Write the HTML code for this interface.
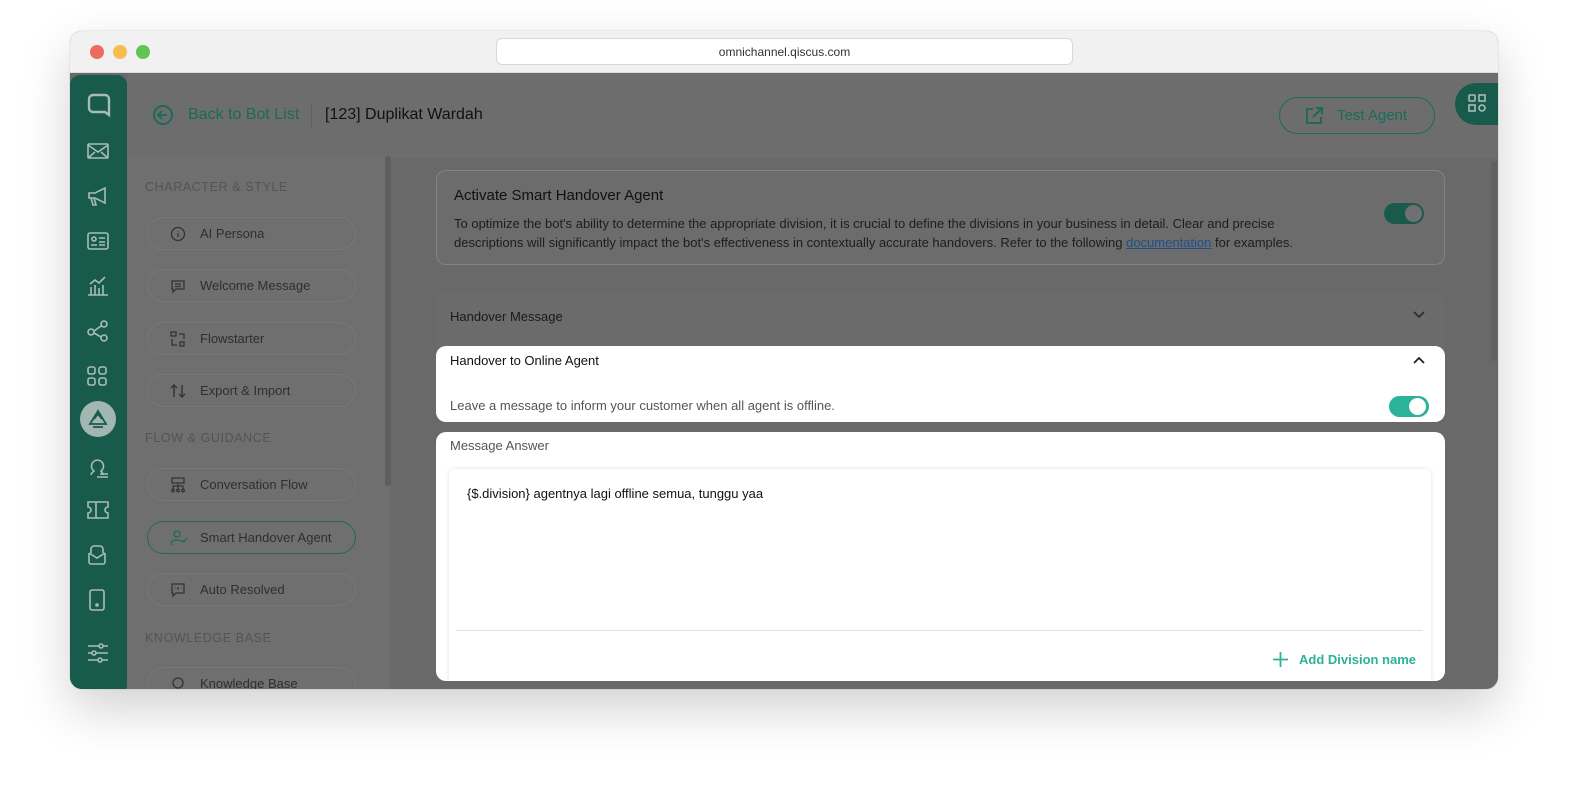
<!DOCTYPE html>
<html><head><meta charset="utf-8">
<style>
*{box-sizing:border-box;margin:0;padding:0}
body{width:1580px;height:804px;background:#fff;font-family:"Liberation Sans",sans-serif;position:relative;overflow:hidden}
.win{position:absolute;left:70px;top:31px;width:1428px;height:658px;border-radius:12px;overflow:hidden;background:#696969;box-shadow:0 20px 50px rgba(0,0,0,.18),0 0 0 1px rgba(0,0,0,.05)}
.tb{position:absolute;left:0;top:0;width:100%;height:42px;background:#f1f1f1;border-bottom:1px solid #dcdcdc}
.dot{position:absolute;top:14px;width:14px;height:14px;border-radius:50%}
.url{position:absolute;left:426px;top:7px;width:577px;height:27px;background:#fff;border:1px solid #d8d8d8;border-radius:6px;text-align:center;font-size:12px;line-height:26px;color:#333}
.a{position:absolute}
.rail{position:absolute;left:0;top:44px;width:57px;height:620px;background:#185b4c;border-radius:10px}
.rail svg{position:absolute;left:17px}
.hdr{position:absolute;left:57px;top:42px;width:1371px;height:85px;background:#6d6d6d}
.nav{position:absolute;left:57px;top:127px;width:263px;height:540px;background:#6f6f6f}
.sec{position:absolute;left:75px;font-size:12.5px;letter-spacing:.6px;color:#545454}
.pill{position:absolute;left:77px;width:209px;height:33px;border:1px solid #787878;border-radius:17px;font-size:13px;color:#2f2f2f;line-height:31px;padding-left:52px}
.pill svg{position:absolute;left:22px;top:8px}
.card{position:absolute;left:366px;width:1009px;border-radius:10px}
.w{background:#fff}
</style></head><body>
<div class="win">
 <div class="tb">
  <div class="dot" style="left:20px;background:#ee6a5f"></div>
  <div class="dot" style="left:43px;background:#f5be4f"></div>
  <div class="dot" style="left:66px;background:#61c554"></div>
  <div class="url">omnichannel.qiscus.com</div>
 </div>
 <div class="hdr"></div>
 <div class="nav"></div>
 <div class="a" style="left:315px;top:125px;width:6px;height:330px;background:#5e5e5e;border-radius:3px"></div>
 <div class="a" style="left:1421px;top:130px;width:6px;height:200px;background:#606060;border-radius:3px"></div>
 <div class="rail">
  <svg style="top:18px" width="24" height="26" viewBox="0 0 24 26" fill="none" stroke="#a8bcb6" stroke-width="2.4"><path d="M6 2h12a4 4 0 0 1 4 4v16l-4-3H6a4 4 0 0 1-4-4V6a4 4 0 0 1 4-4z"/></svg>
  <svg style="top:67px" width="22" height="18" viewBox="0 0 22 18" fill="none" stroke="#a8bcb6" stroke-width="1.6"><rect x="1" y="2" width="20" height="14" rx="1"/><path d="M1 3l10 7 10-7M1 16l7-6M21 16l-7-6"/></svg>
  <svg style="top:111px" width="22" height="20" viewBox="0 0 22 20" fill="none" stroke="#a8bcb6" stroke-width="1.6"><path d="M2 7h6l10-5v15L8 12H2zM4 12l2 7h3l-2-7"/></svg>
  <svg style="top:157px" width="22" height="18" viewBox="0 0 22 18" fill="none" stroke="#a8bcb6" stroke-width="1.6"><rect x="1" y="1" width="20" height="16" rx="2"/><circle cx="7" cy="7" r="2"/><path d="M4 13h6M12 6h6M12 10h6M12 13h6"/></svg>
  <svg style="top:201px" width="22" height="20" viewBox="0 0 22 20" fill="none" stroke="#a8bcb6" stroke-width="1.6"><path d="M1 19h20M4 19v-8M8 19v-10M12 19v-7M16 19v-10M3 8l5-4 4 3 6-6"/></svg>
  <svg style="top:245px" width="22" height="22" viewBox="0 0 22 22" fill="none" stroke="#a8bcb6" stroke-width="1.6"><circle cx="4" cy="12" r="3"/><circle cx="17" cy="4" r="3"/><circle cx="17" cy="18" r="3"/><path d="M7 11l7-5M7 13l7 4"/></svg>
  <svg style="top:291px" width="20" height="20" viewBox="0 0 20 20" fill="none" stroke="#a8bcb6" stroke-width="1.6"><rect x="1" y="1" width="7" height="7" rx="2"/><rect x="12" y="1" width="7" height="7" rx="2"/><rect x="1" y="12" width="7" height="7" rx="2"/><rect x="12" y="12" width="7" height="7" rx="2"/></svg>
  <div class="a" style="left:10px;top:326px;width:36px;height:36px;border-radius:50%;background:#a3b7b1"></div>
  <svg style="top:334px;left:18px" width="20" height="20" viewBox="0 0 20 20" fill="none" stroke="#185b4c" stroke-width="1.8"><path d="M10 2L2 15h16zM6 10l4-5 4 5M5 18h10"/></svg>
  <svg style="top:381px" width="22" height="22" viewBox="0 0 22 22" fill="none" stroke="#a8bcb6" stroke-width="1.6"><path d="M4 19c0-2 2-3 3-4a6 6 0 1 1 7 0c1 1 2 2 2 4M10 21h11M13 18h8"/></svg>
  <svg style="top:426px" width="22" height="18" viewBox="0 0 22 18" fill="none" stroke="#a8bcb6" stroke-width="1.6"><path d="M1 1h20v5a3 3 0 0 0 0 6v5H1v-5a3 3 0 0 0 0-6zM9 1v16"/></svg>
  <svg style="top:470px" width="20" height="20" viewBox="0 0 20 20" fill="none" stroke="#a8bcb6" stroke-width="1.6"><path d="M2 8v9a2 2 0 0 0 2 2h12a2 2 0 0 0 2-2V8M2 8l8 5 8-5M4 8V4a3 3 0 0 1 3-3h6a3 3 0 0 1 3 3v4"/></svg>
  <svg style="top:514px" width="20" height="22" viewBox="0 0 20 22" fill="none" stroke="#a8bcb6" stroke-width="1.6"><rect x="3" y="1" width="14" height="20" rx="2"/><circle cx="10" cy="16" r="1"/></svg>
  <svg style="top:568px" width="22" height="20" viewBox="0 0 22 20" fill="none" stroke="#a8bcb6" stroke-width="1.6"><path d="M1 3h20M1 10h20M1 17h20"/><circle cx="14" cy="3" r="2" fill="#185b4c"/><circle cx="7" cy="10" r="2" fill="#185b4c"/><circle cx="13" cy="17" r="2" fill="#185b4c"/></svg>
 </div>

 <svg class="a" style="left:82px;top:73px" width="22" height="22" viewBox="0 0 22 22" fill="none" stroke="#1b6b58" stroke-width="2"><circle cx="11" cy="11" r="9"/><path d="M15 11H7M10 7l-4 4 4 4"/></svg>
 <div class="a" style="left:118px;top:75px;font-size:16px;color:#1a6b57">Back to Bot List</div>
 <div class="a" style="left:241px;top:72px;width:1px;height:26px;background:#626262"></div>
 <div class="a" style="left:255px;top:75px;font-size:16px;color:#111">[123] Duplikat Wardah</div>

 <div class="a" style="left:1209px;top:66px;width:156px;height:37px;border:1px solid #1e6b58;border-radius:19px"></div>
 <svg class="a" style="left:1234px;top:75px" width="20" height="20" viewBox="0 0 20 20" fill="none" stroke="#1b6b58" stroke-width="2"><path d="M9 3H3v14h14v-6M12 2h6v6M18 2l-9 9"/></svg>
 <div class="a" style="left:1267px;top:76px;font-size:15px;color:#1a6b57">Test Agent</div>
 <div class="a" style="left:1385px;top:52px;width:60px;height:42px;background:#185b4c;border-radius:21px 0 0 21px"></div>
 <svg class="a" style="left:1398px;top:63px" width="18" height="18" viewBox="0 0 18 18" fill="none" stroke="#a8bcb6" stroke-width="1.6"><rect x="1" y="1" width="6" height="6" rx="1"/><rect x="11" y="1" width="6" height="6"/><rect x="1" y="11" width="6" height="6"/><circle cx="14" cy="14" r="3"/></svg>

 <div class="sec" style="top:149px">CHARACTER &amp; STYLE</div>
 <div class="pill" style="top:186px"><svg width="16" height="16" viewBox="0 0 16 16" fill="none" stroke="#333" stroke-width="1.3"><circle cx="8" cy="8" r="6.5"/><path d="M8 7v4M8 5v.5"/></svg>AI Persona</div>
 <div class="pill" style="top:238px"><svg width="16" height="16" viewBox="0 0 16 16" fill="none" stroke="#333" stroke-width="1.3"><path d="M2 3h12v8H6l-3 3v-3H2z M5 6h6M5 8.5h6"/></svg>Welcome Message</div>
 <div class="pill" style="top:291px"><svg width="16" height="16" viewBox="0 0 16 16" fill="none" stroke="#333" stroke-width="1.3"><rect x="1" y="1" width="5" height="4"/><rect x="10" y="11" width="4" height="4"/><path d="M9 3h5v5M2 8v6h5"/></svg>Flowstarter</div>
 <div class="pill" style="top:343px"><svg width="16" height="16" viewBox="0 0 16 16" fill="none" stroke="#333" stroke-width="1.4"><path d="M4 14V2M1 5l3-3 3 3M12 2v12M9 11l3 3 3-3"/></svg>Export &amp; Import</div>
 <div class="sec" style="top:400px">FLOW &amp; GUIDANCE</div>
 <div class="pill" style="top:437px"><svg width="16" height="16" viewBox="0 0 16 16" fill="none" stroke="#333" stroke-width="1.3"><rect x="2" y="1" width="12" height="5"/><path d="M8 6v3M3 12V9h10v3M8 9v3"/><circle cx="3" cy="13.5" r="1.3"/><circle cx="8" cy="13.5" r="1.3"/><circle cx="13" cy="13.5" r="1.3"/></svg>Conversation Flow</div>
 <div class="pill" style="top:490px;border-color:#1e6b58"><svg width="18" height="16" viewBox="0 0 18 16" fill="none" stroke="#1e6b58" stroke-width="1.3"><circle cx="7" cy="4" r="3"/><path d="M1 15c0-4 3-5 6-5s4 1 5 2M12 10l2 2 3-4"/></svg>Smart Handover Agent</div>
 <div class="pill" style="top:542px"><svg width="16" height="16" viewBox="0 0 16 16" fill="none" stroke="#333" stroke-width="1.3"><path d="M2 2h12v9H6l-3 3v-3H2zM5 6h.5M8 5v3M11 6h.5"/></svg>Auto Resolved</div>
 <div class="sec" style="top:600px">KNOWLEDGE BASE</div>
 <div class="pill" style="top:636px"><svg width="16" height="16" viewBox="0 0 16 16" fill="none" stroke="#333" stroke-width="1.3"><circle cx="8" cy="7" r="5"/></svg>Knowledge Base</div>

 <div class="card" style="top:139px;height:95px;border:1px solid #838383;background:#6c6c6c"></div>
 <div class="a" style="left:384px;top:156px;font-size:15px;color:#111">Activate Smart Handover Agent</div>
 <div class="a" style="left:384px;top:183px;font-size:13px;line-height:19px;color:#1d1d1d;width:875px">To optimize the bot's ability to determine the appropriate division, it is crucial to define the divisions in your business in detail. Clear and precise descriptions will significantly impact the bot's effectiveness in contextually accurate handovers. Refer to the following <span style="color:#1f4f8a;text-decoration:underline">documentation</span> for examples.</div>
 <div class="a" style="left:1314px;top:172px;width:40px;height:21px;border-radius:11px;background:#1a5a4c"></div>
 <div class="a" style="left:1335px;top:174px;width:17px;height:17px;border-radius:50%;background:#707070"></div>

 <div class="card" style="top:262px;height:84px;background:#6b6b6b"></div>
 <div class="a" style="left:380px;top:278px;font-size:13px;color:#1a1a1a">Handover Message</div>
 <svg class="a" style="left:1343px;top:280px" width="12" height="8" viewBox="0 0 12 8" fill="none" stroke="#2a2a2a" stroke-width="1.6"><path d="M1 1l5 5 5-5"/></svg>

 <div class="card w" style="top:315px;height:76px"></div>
 <div class="a" style="left:380px;top:322px;font-size:13px;color:#111">Handover to Online Agent</div>
 <svg class="a" style="left:1343px;top:325px" width="12" height="8" viewBox="0 0 12 8" fill="none" stroke="#222" stroke-width="1.8"><path d="M1 7l5-5 5 5"/></svg>
 <div class="a" style="left:380px;top:367px;font-size:13px;color:#555">Leave a message to inform your customer when all agent is offline.</div>
 <div class="a" style="left:1319px;top:365px;width:40px;height:21px;border-radius:11px;background:#2bb298"></div>
 <div class="a" style="left:1339px;top:367px;width:17px;height:17px;border-radius:50%;background:#fff"></div>

 <div class="card w" style="top:401px;height:249px;overflow:hidden">
  <div class="a" style="left:14px;top:6px;font-size:13px;color:#555">Message Answer</div>
  <div class="a" style="left:13px;top:37px;width:982px;height:230px;background:#fff;border-radius:6px;box-shadow:0 0 5px rgba(0,0,0,.12)"></div>
  <div class="a" style="left:31px;top:54px;font-size:13px;color:#111">{$.division} agentnya lagi offline semua, tunggu yaa</div>
  <div class="a" style="left:20px;top:198px;width:967px;height:1px;background:#e2e2e2"></div>
  <svg class="a" style="left:837px;top:220px" width="15" height="15" viewBox="0 0 15 15" fill="none" stroke="#2bb298" stroke-width="1.8"><path d="M7.5 0v15M0 7.5h15"/></svg>
  <div class="a" style="left:863px;top:220px;font-size:13px;font-weight:bold;color:#2bb298">Add Division name</div>
 </div>
</div>
</body></html>
